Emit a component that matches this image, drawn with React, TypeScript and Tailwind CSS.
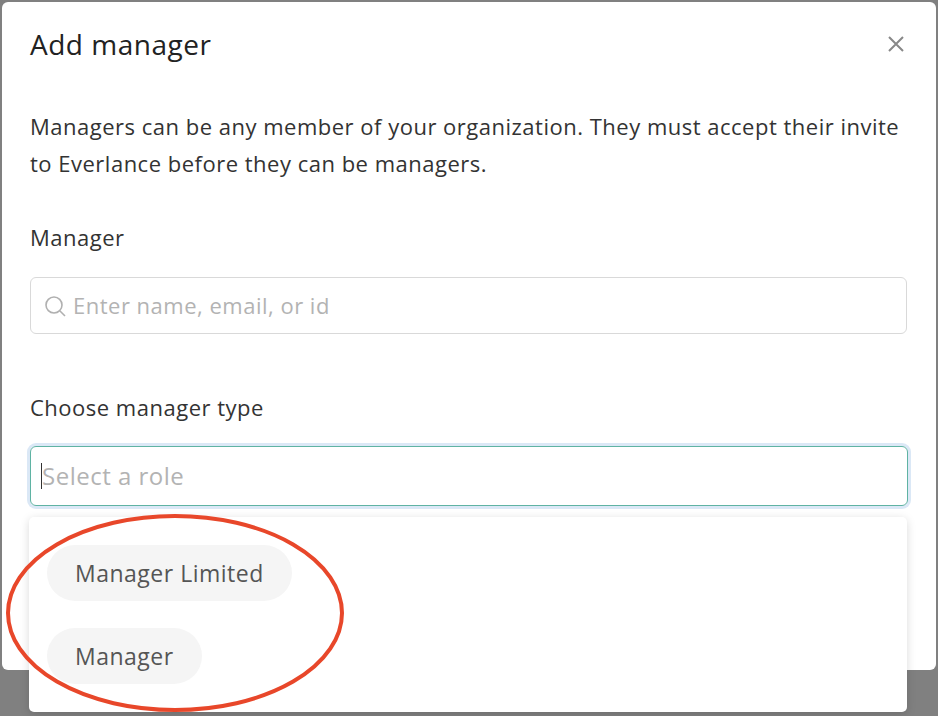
export default function App() {
  const f = { fontFamily: "'Open Sans', 'Noto Sans', sans-serif" };
  return (
    <div style={f} className="relative w-[938px] h-[716px] overflow-hidden bg-[#808080] tracking-[0.5px]">
      <div className="absolute left-[2px] top-[2px] w-[934px] h-[668px] bg-white rounded-[6px]">
        <div className="flex items-center justify-between pl-[28px] pr-[30px] pt-[28px] h-[56px]">
          <h1 className="text-[28px] text-[#222] leading-none">Add manager</h1>
          <svg width="20" height="20" viewBox="0 0 20 20" className="text-[#888]"><path d="M3 3L17 17M17 3L3 17" stroke="currentColor" strokeWidth="2" /></svg>
        </div>
        <div className="px-[28px] pt-[50px]">
          <p className="text-[22px] leading-[37px] text-[#333]">Managers can be any member of your organization. They must accept their invite to Everlance before they can be managers.</p>
          <div className="mt-[40px] text-[22px] text-[#333] leading-[30px]">Manager</div>
          <div className="mt-[25px] h-[57px] w-[877px] border border-[#d9d9d9] rounded-[6px] flex items-center px-[12px] gap-[6px]">
            <svg width="24" height="24" viewBox="0 0 24 24" fill="none" stroke="#b0b0b0" strokeWidth="1.6"><circle cx="11" cy="11" r="8" /><path d="M17 17l5 5" /></svg>
            <span className="text-[22px] text-[#b3b3b3]">Enter name, email, or id</span>
          </div>
          <div className="mt-[58px] text-[22px] text-[#333] leading-[30px]">Choose manager type</div>
          <div className="mt-[24px] h-[60px] w-[878px] border border-[#5fb3a3] rounded-[6px] shadow-[0_0_0_3px_#dbe8f6] flex items-center px-[10px]">
            <span className="w-px h-[26px] bg-[#333]" />
            <span className="text-[24px] text-[#b3b3b3]">Select a role</span>
          </div>
        </div>
        <div className="absolute right-[30px] top-[598px] w-[12px] h-[52px] border-r border-[#5fb3a3] rounded-r-[6px]" />
      </div>
      <div className="absolute left-[29px] top-[517px] w-[878px] h-[195px] bg-white rounded-[5px] shadow-[0_2px_10px_rgba(0,0,0,0.15)] flex flex-col items-start gap-[27px] pt-[28px] pl-[18px]">
        <div className="h-[56px] px-[28px] rounded-full bg-[#f5f5f5] flex items-center text-[23px] text-[#555]">Manager Limited</div>
        <div className="h-[56px] px-[28px] rounded-full bg-[#f5f5f5] flex items-center text-[23px] text-[#555]">Manager</div>
      </div>
      <svg className="absolute left-0 top-0 pointer-events-none" width="938" height="716">
        <ellipse cx="175" cy="613" rx="167" ry="97" fill="none" stroke="#e8472a" strokeWidth="4" />
      </svg>
    </div>
  );
}
